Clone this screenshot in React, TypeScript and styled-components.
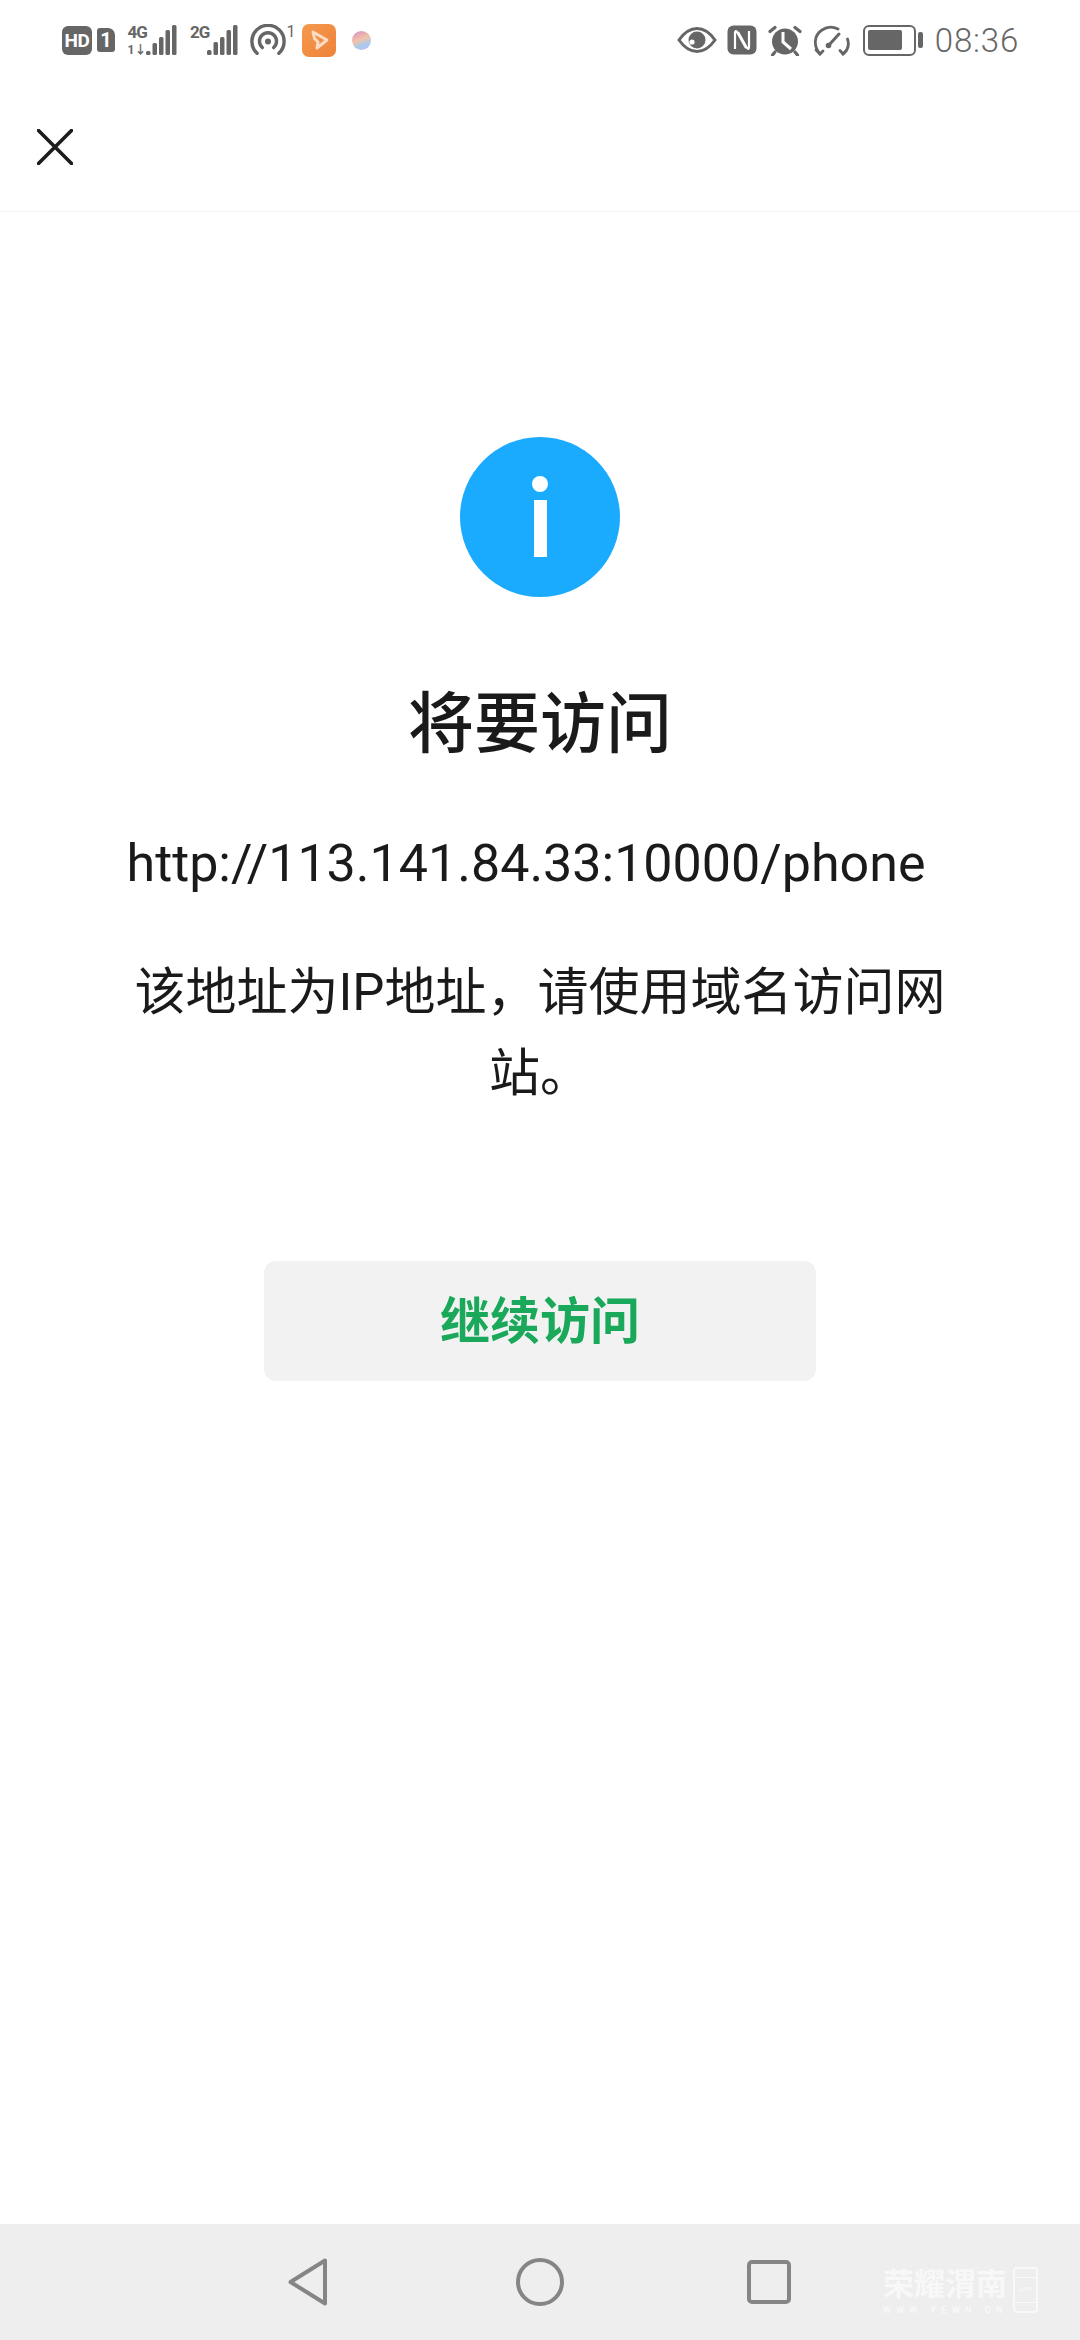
import styled, { createGlobalStyle } from "styled-components";

const GlobalStyle = createGlobalStyle`
    html, body {
        margin: 0;
        padding: 0;
        background: #fff;
    }
    * {
        box-sizing: border-box;
    }
`;

const GRAY = "#666";
const STEP = 6.5;

const SignalBars = ({ bars }: { bars: number[] }) => (
    <svg width={bars.length * STEP} height="30" viewBox={`0 0 ${bars.length * STEP} 30`}>
        {bars.map((h, i) => (
            <rect key={i} x={i * STEP + 1} y={30 - h} width="4.5" height={h} rx="1.5" fill={GRAY} />
        ))}
    </svg>
);

export default function App() {
    return (
        <Page>
            <GlobalStyle />
            <StatusBar>
                <StatusGroup>
                    <HdBadge>HD</HdBadge>
                    <SimBadge>1</SimBadge>
                    <Signal>
                        <SignalLabel $width={17.5}>
                            <b>4G</b>
                            <small>1↓</small>
                        </SignalLabel>
                        <SignalBars bars={[4, 12, 18, 25, 30]} />
                    </Signal>
                    <Signal>
                        <SignalLabel $width={16}>
                            <b>2G</b>
                        </SignalLabel>
                        <SignalBars bars={[5, 13, 18, 25, 30]} />
                    </Signal>
                    <Hotspot>
                        <svg width="38" height="32" viewBox="0 0 38 32" fill="none" stroke={GRAY} strokeWidth="3.6" strokeLinecap="round">
                            <path d="M7.5 30 A17 17 0 1 1 30.5 30" />
                            <path d="M13 24 A9 9 0 1 1 25 24" />
                            <circle cx="19" cy="17.5" r="3.2" fill={GRAY} stroke="none" />
                        </svg>
                        <sup>1</sup>
                    </Hotspot>
                    <AppIcon>
                        <svg width="22" height="22" viewBox="0 0 22 22" fill="none" stroke="#fbdcc4" strokeWidth="3" strokeLinejoin="round">
                            <path d="M5 3 L19 11 L9 19 L10 13 L6.5 9.5 Z" />
                        </svg>
                    </AppIcon>
                    <Bubble />
                </StatusGroup>
                <StatusGroup>
                    <StatusIcon $gap={10} width="40" height="26" viewBox="0 0 40 26">
                        <path d="M2 13 C9 3 15 1.5 20 1.5 C25 1.5 31 3 38 13 C31 23 25 24.5 20 24.5 C15 24.5 9 23 2 13 Z" fill="none" stroke={GRAY} strokeWidth="3" />
                        <circle cx="20" cy="13" r="8.5" fill={GRAY} />
                        <circle cx="15" cy="15" r="2.6" fill="#fff" />
                    </StatusIcon>
                    <StatusIcon $gap={11} width="30" height="30" viewBox="0 0 30 30">
                        <rect x="0.5" y="0.5" width="29" height="29" rx="6" fill={GRAY} />
                        <path d="M8 24 V8 Q8 5 10 7 L19 23" fill="none" stroke="#fff" strokeWidth="2.2" />
                        <path d="M22 6 V22 Q22 25 20 23 L11 7" fill="none" stroke="#fff" strokeWidth="2.2" />
                    </StatusIcon>
                    <StatusIcon $gap={11} width="34" height="31" viewBox="0 0 34 31">
                        <circle cx="17" cy="16.5" r="13" fill={GRAY} />
                        <path d="M15 7 V17 L23 24" fill="none" stroke="#fff" strokeWidth="3" />
                        <path d="M2 6.5 L7 2.5 M32 6.5 L27 2.5 M7 27 L4.5 30 M27 27 L29.5 30" stroke={GRAY} strokeWidth="3.2" strokeLinecap="round" />
                    </StatusIcon>
                    <StatusIcon $gap={13} width="37" height="31" viewBox="0 0 37 31" fill="none" stroke={GRAY} strokeWidth="2.8" strokeLinecap="round">
                        <path d="M7 29 C0 21 1 10 9 5 C14 1.5 20 1.5 25 4" />
                        <path d="M3 25 L7 29 L10 26" />
                        <path d="M34.5 14 C36.5 20 35 25 30 29" />
                        <path d="M27 25.5 L30 29 L33 26" />
                        <path d="M16 20 L26 9" strokeWidth="3" />
                        <circle cx="15.5" cy="20.5" r="2.8" fill={GRAY} stroke="none" />
                    </StatusIcon>
                    <Battery>
                        <BatteryBody>
                            <BatteryLevel $level={80} />
                        </BatteryBody>
                        <BatteryCap />
                    </Battery>
                    <Clock>08:36</Clock>
                </StatusGroup>
            </StatusBar>

            <TopBar>
                <CloseIcon width="36" height="36" viewBox="0 0 36 36">
                    <path d="M1.5 1.5 L34.5 34.5 M34.5 1.5 L1.5 34.5" stroke="#1c1c1c" strokeWidth="3.6" strokeLinecap="round" />
                </CloseIcon>
            </TopBar>

            <Main>
                <InfoCircle>
                    <InfoDot />
                    <InfoBar />
                </InfoCircle>
                <Title>将要访问</Title>
                <Url>http://113.141.84.33:10000/phone</Url>
                <Message>该地址为IP地址，请使用域名访问网站。</Message>
                <ContinueButton>继续访问</ContinueButton>
            </Main>

            <NavBar>
                <NavButton $width={228}>
                    <svg width="40" height="48" viewBox="0 0 40 48" fill="none" stroke="#858585" strokeWidth="4" strokeLinejoin="round">
                        <path d="M37 2.5 V45.5 L2.5 24 Z" />
                    </svg>
                </NavButton>
                <NavButton $width={231}>
                    <svg width="48" height="48" viewBox="0 0 48 48" fill="none" stroke="#858585" strokeWidth="4">
                        <circle cx="24" cy="24" r="22" />
                    </svg>
                </NavButton>
                <NavButton $width={44}>
                    <svg width="44" height="44" viewBox="0 0 44 44" fill="none" stroke="#858585" strokeWidth="4">
                        <rect x="2" y="2" width="40" height="40" rx="3" />
                    </svg>
                </NavButton>
                <Watermark>
                    <WatermarkText>
                        <strong>荣耀渭南</strong>
                        <span>WWW.YEWN.CN</span>
                    </WatermarkText>
                    <WatermarkPhone>
                        <i />
                        <em>APP</em>
                        <u />
                    </WatermarkPhone>
                </Watermark>
            </NavBar>
        </Page>
    );
}

const Page = styled.div`
    width: 1080px;
    height: 2340px;
    display: flex;
    flex-direction: column;
    background: #fff;
    overflow: hidden;
    font-family: "Roboto", "Noto Sans CJK SC", sans-serif;
`;

const StatusBar = styled.div`
    height: 80px;
    padding: 0 61px 0 62px;
    display: flex;
    justify-content: space-between;
    align-items: center;
`;

const StatusGroup = styled.div`
    display: flex;
    align-items: center;
`;

const StatusIcon = styled.svg<{ $gap: number }>`
    display: block;
    flex: none;
    margin-right: ${(p) => p.$gap}px;
`;

const HdBadge = styled.div`
    width: 30px;
    height: 29px;
    border-radius: 6px;
    background: ${GRAY};
    color: #fff;
    font-size: 19px;
    font-weight: 700;
    letter-spacing: -0.5px;
    text-align: center;
    line-height: 29px;
`;

const SimBadge = styled.div`
    width: 18px;
    height: 24px;
    margin-left: 5px;
    border-radius: 3px 7px 3px 3px;
    background: ${GRAY};
    color: #fff;
    font-size: 20px;
    font-weight: 700;
    text-align: center;
    line-height: 24px;
`;

const Signal = styled.div`
    display: flex;
    align-items: flex-end;
    height: 30px;
    margin-left: 12.5px;
`;

const SignalLabel = styled.div<{ $width: number }>`
    width: ${(p) => p.$width}px;
    height: 30px;
    display: flex;
    flex-direction: column;
    justify-content: space-between;
    color: ${GRAY};
    white-space: nowrap;

    b {
        font-size: 17px;
        line-height: 14px;
        font-weight: 700;
        letter-spacing: -1px;
    }

    small {
        font-size: 12px;
        line-height: 10px;
        font-weight: 700;
    }
`;

const Hotspot = styled.div`
    display: flex;
    align-items: flex-start;
    margin-left: 11px;
    width: 46px;
    color: ${GRAY};

    sup {
        font-size: 16px;
        line-height: 14px;
        margin: 1px 0 0 1px;
    }
`;

const AppIcon = styled.div`
    width: 34px;
    height: 33px;
    margin-left: 6px;
    border-radius: 7px;
    background: linear-gradient(135deg, #f49a4f, #ee8238);
    display: flex;
    align-items: center;
    justify-content: center;
`;

const Bubble = styled.div`
    width: 19px;
    height: 19px;
    margin-left: 16px;
    border-radius: 50%;
    background: linear-gradient(160deg, #d88cc0, #f1c4a8 45%, #a5cbf0 72%, #c9b6ec);
`;

const Battery = styled.div`
    display: flex;
    align-items: center;
    margin-right: 12px;
`;

const BatteryBody = styled.div`
    width: 53px;
    height: 31px;
    padding: 3.5px;
    border: 2.5px solid ${GRAY};
    border-radius: 6px;
`;

const BatteryLevel = styled.div<{ $level: number }>`
    height: 100%;
    width: ${(p) => p.$level}%;
    background: ${GRAY};
    border-radius: 2px;
`;

const BatteryCap = styled.div`
    width: 5px;
    height: 16px;
    margin-left: 2px;
    border-radius: 2px;
    background: ${GRAY};
`;

const Clock = styled.div`
    font-size: 33px;
    font-weight: 300;
    color: ${GRAY};
    letter-spacing: 0.8px;
`;

const TopBar = styled.div`
    height: 132px;
    padding: 49px 0 0 37px;
    border-bottom: 1px solid #f5f5f5;
`;

const CloseIcon = styled.svg`
    display: block;
`;

const Main = styled.main`
    flex: 1;
    padding: 225px 125px 0;
    display: flex;
    flex-direction: column;
    align-items: center;
    text-align: center;
`;

const InfoCircle = styled.div`
    width: 160px;
    height: 160px;
    border-radius: 50%;
    background: #1aabff;
    display: flex;
    flex-direction: column;
    align-items: center;
    padding-top: 39px;
`;

const InfoDot = styled.div`
    width: 16px;
    height: 16px;
    border-radius: 50%;
    background: #fff;
`;

const InfoBar = styled.div`
    width: 13px;
    height: 57px;
    margin-top: 8px;
    background: #fff;
`;

const Title = styled.h1`
    margin: 83px 0 0;
    font-size: 66px;
    line-height: 90px;
    font-weight: 500;
    color: #1a1a1a;
`;

const Url = styled.div`
    margin: 59px 28px 0 0;
    font-size: 52px;
    line-height: 70px;
    color: #1a1a1a;
    white-space: nowrap;
`;

const Message = styled.p`
    margin: 53px 0 0;
    font-size: 51px;
    line-height: 81px;
    color: #1a1a1a;
`;

const ContinueButton = styled.button`
    width: 552px;
    height: 120px;
    margin-top: 147px;
    padding: 0 0 8px;
    border: none;
    border-radius: 12px;
    background: #f2f2f2;
    color: #1aa85a;
    font-family: inherit;
    font-size: 50px;
    font-weight: 700;
`;

const NavBar = styled.nav`
    position: relative;
    height: 116px;
    padding-left: 288px;
    background: #eee;
    display: flex;
    align-items: center;
`;

const NavButton = styled.div<{ $width: number }>`
    width: ${(p) => p.$width}px;
    flex: none;
    display: flex;

    svg {
        display: block;
    }
`;

const Watermark = styled.div`
    position: absolute;
    left: 883px;
    top: 43px;
    display: flex;
    gap: 6px;
    color: #f8f8f8;
`;

const WatermarkText = styled.div`
    width: 124px;
    display: flex;
    flex-direction: column;
    white-space: nowrap;

    strong {
        font-size: 31px;
        line-height: 36px;
        font-weight: 700;
    }

    span {
        margin-top: 2px;
        font-size: 9px;
        line-height: 10px;
        font-weight: 700;
        letter-spacing: 5.4px;
    }
`;

const WatermarkPhone = styled.div`
    width: 25px;
    height: 46px;
    border: 2px solid #f8f8f8;
    border-radius: 4px;
    display: flex;
    flex-direction: column;
    align-items: center;

    i {
        width: 100%;
        height: 9px;
        border-bottom: 1.5px solid #f8f8f8;
    }

    em {
        flex: 1;
        font-size: 7px;
        line-height: 24px;
        font-style: normal;
    }

    u {
        width: 100%;
        height: 9px;
        border-top: 1.5px solid #f8f8f8;
    }
`;
